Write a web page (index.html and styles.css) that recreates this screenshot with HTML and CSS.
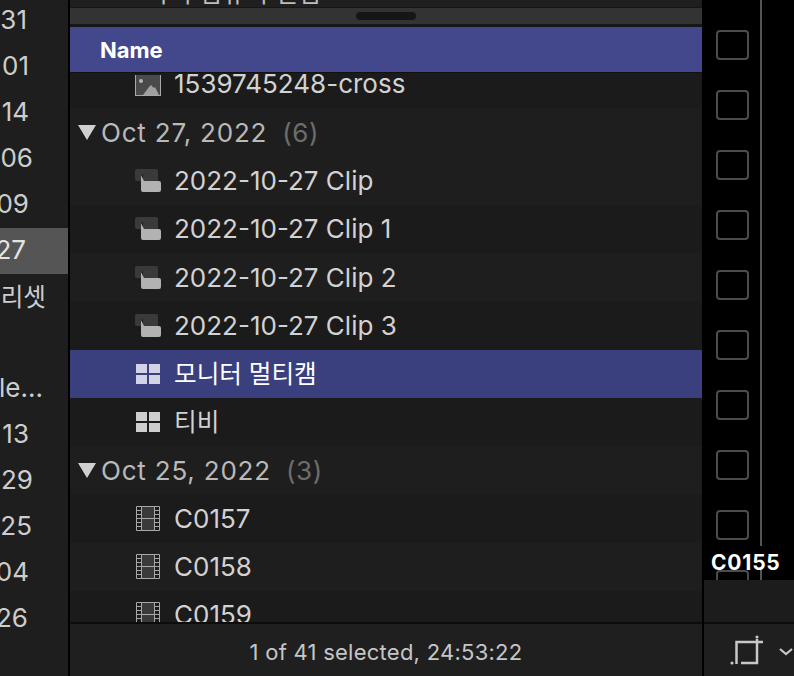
FILE: index.html
```html
<!DOCTYPE html>
<html lang="en">
<head>
  <meta charset="UTF-8" />
  <title>Browser list</title>
  <link rel="stylesheet" href="styles.css">
</head>
<body>
  <svg class="icon-defs" width="0" height="0">
    <symbol id="i-clip" viewBox="0 0 26 23">
      <path d="M2 0h19a2 2 0 0 1 2 2v11H8V5l-2 1v6H2a2 2 0 0 1-2-2V2a2 2 0 0 1 2-2z" fill="#3a3a3a"/>
      <path d="M6 6l3 6h15a2 2 0 0 1 2 2v7a2 2 0 0 1-2 2H8a2 2 0 0 1-2-2z" fill="#b2b2b2"/>
    </symbol>
    <symbol id="i-multi" viewBox="0 0 24 20">
      <path d="M0 0h11v9H0zM13 0h11v9H13zM0 11h11v9H0zM13 11h11v9H13z" fill="currentColor"/>
    </symbol>
    <symbol id="i-film" viewBox="0 0 24 25">
      <rect x="5" y="1" width="14" height="23" fill="#3a3a3a"/>
      <path d="M.5.5h23v24H.5zM5.5.5v24M18.5.5v24M5.5 12.5h13M.5 4.5h5M.5 8.5h5M.5 12.5h5M.5 16.5h5M.5 20.5h5M18.5 4.5h5M18.5 8.5h5M18.5 12.5h5M18.5 16.5h5M18.5 20.5h5" fill="none" stroke="#a8a8a8"/>
    </symbol>
  </svg>

  <div class="app">
    <div class="sidebar">
      <div class="bin e27">31</div>
      <div class="bin e29">01</div>
      <div class="bin e29">14</div>
      <div class="bin e33">06</div>
      <div class="bin e29">09</div>
      <div class="bin e26 active">27</div>
      <div class="bin e46 ko">리셋</div>
      <div class="bin"></div>
      <div class="bin e43">le...</div>
      <div class="bin e29">13</div>
      <div class="bin e33">29</div>
      <div class="bin e32">25</div>
      <div class="bin e29">04</div>
      <div class="bin e28">26</div>
    </div>

    <div class="browser">
      <div class="top-strip"><span class="top-cut">사이 컴퓨터 편집</span></div>
      <div class="grip-bar"><span class="grip"></span></div>
      <div class="list-head">Name</div>

      <div class="list">
        <div class="row row-first">
          <svg class="thumb" width="26" height="21" viewBox="0 0 26 21">
            <rect x=".5" y="-6" width="25" height="26.5" fill="#4a4a4a" stroke="#a8a8a8"/>
            <circle cx="6" cy="6" r="2" fill="#b5b5b5"/>
            <path d="M8 20l6-8 2-2 3 3 1-1 4 8z" fill="#a0a0a0"/>
          </svg>
          <span class="name">1539745248-cross</span>
        </div>
        <div class="row group">
          <span class="arrow"></span>
          <span class="date">Oct 27, 2022</span><span class="count">(6)</span>
        </div>
        <div class="row alt">
          <svg class="icon clip"><use href="#i-clip"/></svg>
          <span class="name">2022-10-27 Clip</span>
        </div>
        <div class="row">
          <svg class="icon clip"><use href="#i-clip"/></svg>
          <span class="name">2022-10-27 Clip 1</span>
        </div>
        <div class="row alt">
          <svg class="icon clip"><use href="#i-clip"/></svg>
          <span class="name">2022-10-27 Clip 2</span>
        </div>
        <div class="row">
          <svg class="icon clip"><use href="#i-clip"/></svg>
          <span class="name">2022-10-27 Clip 3</span>
        </div>
        <div class="row selected">
          <svg class="icon multi"><use href="#i-multi"/></svg>
          <span class="name ko">모니터 멀티캠</span>
        </div>
        <div class="row">
          <svg class="icon multi"><use href="#i-multi"/></svg>
          <span class="name ko">티비</span>
        </div>
        <div class="row group alt">
          <span class="arrow"></span>
          <span class="date">Oct 25, 2022</span><span class="count">(3)</span>
        </div>
        <div class="row">
          <svg class="icon film"><use href="#i-film"/></svg>
          <span class="name">C0157</span>
        </div>
        <div class="row alt">
          <svg class="icon film"><use href="#i-film"/></svg>
          <span class="name">C0158</span>
        </div>
        <div class="row">
          <svg class="icon film"><use href="#i-film"/></svg>
          <span class="name">C0159</span>
        </div>
      </div>

      <div class="status">1 of 41 selected, 24:53:22</div>
    </div>

    <div class="viewer">
      <div class="strip">
        <div class="frames">
          <span class="frame"></span>
          <span class="frame"></span>
          <span class="frame"></span>
          <span class="frame"></span>
          <span class="frame"></span>
          <span class="frame"></span>
          <span class="frame"></span>
          <span class="frame"></span>
          <span class="frame"></span>
          <span class="frame"></span>
        </div>
        <span class="clip-label">C0155</span>
      </div>
      <div class="under-strip"></div>
      <div class="tools">
        <svg class="crop" width="34" height="32" viewBox="0 0 34 32">
          <path d="M6.5 29V7H33" fill="none" stroke="#c8c8c8" stroke-width="2.5"/>
          <path d="M27 4V28H11" fill="none" stroke="#c8c8c8" stroke-width="2.5"/>
          <circle cx="27" cy="2" r="1.6" fill="#c8c8c8"/>
          <circle cx="2" cy="28" r="1.6" fill="#c8c8c8"/>
        </svg>
        <svg class="chevron" width="14" height="8" viewBox="0 0 14 8">
          <path d="M1 1l6 5 6-5" fill="none" stroke="#c8c8c8" stroke-width="2.2"/>
        </svg>
      </div>
    </div>
  </div>
</body>
</html>
```

FILE: styles.css
```css
* {
  box-sizing: border-box;
}
html, body {
  margin: 0;
  padding: 0;
  height: 100%;
  overflow: hidden;
  background: #000;
}
body {
  font-family: Inter, "Noto Sans CJK KR", sans-serif;
  color: #cfcfcf;
}
.icon-defs {
  position: absolute;
}
.app {
  display: flex;
  width: 794px;
  height: 676px;
}

/* left column, its labels are cut off by the edge */
.sidebar {
  width: 68px;
  margin-right: 2px;
  background: #1e1e1e;
  overflow: hidden;
}
.bin {
  display: flex;
  justify-content: flex-end;
  align-items: center;
  height: 46px;
  font-size: 26px;
  color: #cdcdcd;
  white-space: nowrap;
}
.bin.ko {
  font-size: 24.6px;
}
.sidebar .bin:first-child {
  margin-top: -4px;
}
.bin.active {
  margin-top: 2px;
  margin-bottom: -2px;
  padding-bottom: 4px;
  background: #555;
  color: #e4e4e4;
}
.e26 { padding-right: 42px; }
.e27 { padding-right: 41px; }
.e28 { padding-right: 40px; }
.e29 { padding-right: 39px; }
.e32 { padding-right: 36px; }
.e33 { padding-right: 35px; }
.e43 { padding-right: 25px; }
.e46 { padding-right: 22px; }

/* middle list */
.browser {
  display: flex;
  flex-direction: column;
  width: 632px;
  margin-right: 2px;
  background: #1e1e1e;
}
.top-strip {
  height: 7px;
  padding-left: 76px;
  background: #1f1f1f;
  overflow: hidden;
}
.top-cut {
  display: block;
  margin-top: -21px;
  font-size: 25px;
  line-height: 28px;
  color: #bdbdbd;
}
.grip-bar {
  display: flex;
  justify-content: center;
  align-items: center;
  height: 20px;
  border-top: 1px solid #161616;
  border-bottom: 3px solid #161616;
  background: #333;
}
.grip {
  width: 60px;
  height: 8px;
  border-radius: 4px;
  background: #161616;
}
.list-head {
  display: flex;
  align-items: center;
  height: 46px;
  padding-left: 30px;
  border-bottom: 1px solid #111;
  background: #43488c;
  color: #fff;
  font-size: 22px;
  font-weight: 700;
}
.list {
  flex: none;
  height: 551px;
  overflow: hidden;
  border-bottom: 2px solid #0c0c0c;
}
.row {
  display: flex;
  align-items: center;
  height: 48.25px;
  padding-left: 65px;
  background: #1b1b1b;
}
.row.alt, .row.group {
  background: #1e1e1e;
}
.row-first {
  height: 35.25px;
  align-items: flex-end;
  padding-bottom: 13.25px;
}
.row-first .name {
  line-height: 24px;
  margin-bottom: -1px;
}
.thumb {
  margin-right: 13px;
  margin-bottom: -1px;
  flex: none;
}
.icon {
  flex: none;
  margin-right: 13px;
}
.icon.clip {
  width: 26px;
  height: 23px;
}
.icon.multi {
  width: 26px;
  height: 20px;
  padding: 0 1px;
  color: #cecece;
}
.icon.film {
  width: 26px;
  height: 25px;
  padding: 0 1px;
}
.name {
  font-size: 26px;
  color: #d2d2d2;
  white-space: nowrap;
}
.name.ko {
  margin-bottom: 3px;
  font-size: 24.6px;
}
.row.selected {
  background: #3a3f7e;
}
.row.selected .name {
  color: #fff;
}
.row.selected .icon {
  color: #d2d4e6;
}
.row.group {
  padding-left: 8px;
}
.arrow {
  width: 0;
  height: 0;
  margin-right: 5px;
  border-left: 9px solid transparent;
  border-right: 9px solid transparent;
  border-top: 15px solid #d0d0d0;
}
.date {
  font-size: 26px;
  letter-spacing: .8px;
  color: #b9b9b9;
}
.count {
  margin-left: 15px;
  font-size: 26px;
  letter-spacing: .6px;
  color: #6d6d6d;
}
.status {
  flex: 1;
  display: flex;
  justify-content: center;
  align-items: center;
  padding-top: 4px;
  background: #1f1f1f;
  font-size: 22px;
  letter-spacing: .25px;
  color: #c6c6c6;
}

/* right filmstrip */
.viewer {
  display: flex;
  flex-direction: column;
  flex: 1;
}
.strip {
  position: relative;
  height: 580px;
  background: #000;
  overflow: hidden;
}
.strip::after {
  content: "";
  position: absolute;
  left: 56px;
  top: 0;
  bottom: 0;
  width: 2px;
  background: #555;
}
.frames {
  display: flex;
  flex-direction: column;
  gap: 30px;
  padding: 30px 0 0 12px;
}
.frame {
  flex: none;
  width: 33px;
  height: 30px;
  border: 2px solid #4c4c4c;
  border-radius: 4px;
}
.clip-label {
  position: absolute;
  left: 7px;
  top: 546px;
  height: 24px;
  padding-top: 6px;
  color: #fff;
  font-size: 21px;
  font-weight: 700;
  line-height: 22px;
  letter-spacing: .8px;
  background: #000;
  z-index: 1;
}
.under-strip {
  height: 44px;
  background: #1c1c1c;
  border-bottom: 2px solid #0c0c0c;
  flex: none;
}
.tools {
  display: flex;
  align-items: center;
  flex: 1;
  padding: 2px 1px 0 26px;
  background: #1f1f1f;
}
.chevron {
  margin-left: 15px;
  margin-top: 2px;
}
```
